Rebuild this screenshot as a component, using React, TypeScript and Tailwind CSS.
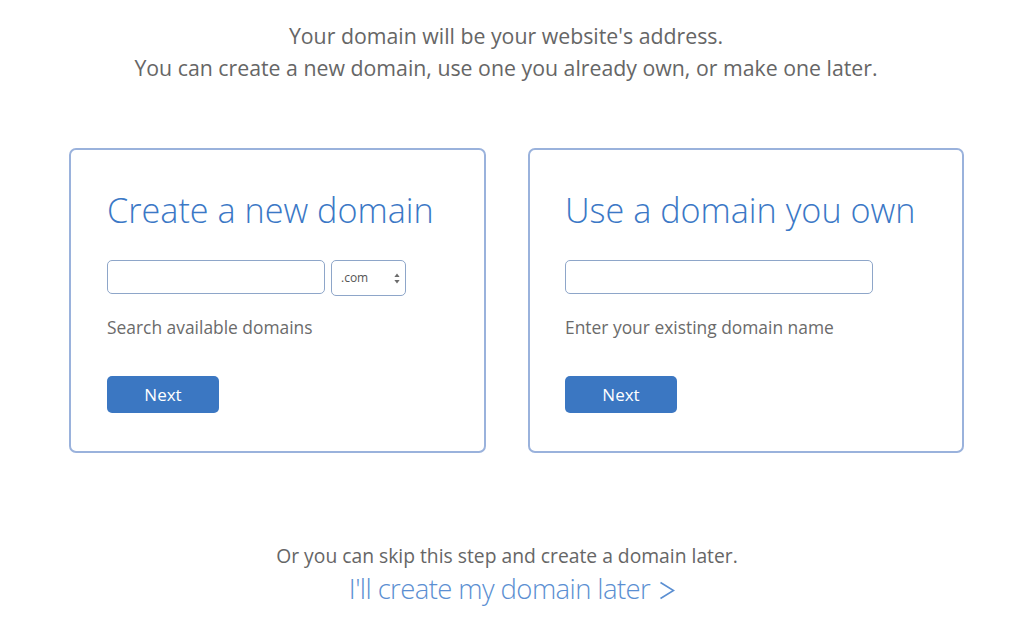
function SelectArrows() {
  return (
    <svg width="6" height="11" viewBox="0 0 6 11" className="shrink-0">
      <path d="M3 0.5 L5.6 4 H0.4 Z" fill="#6b6b6b" />
      <path d="M3 10.5 L5.6 7 H0.4 Z" fill="#6b6b6b" />
    </svg>
  );
}

function NextButton() {
  return (
    <button className="w-[112px] h-[37px] rounded-[5px] bg-[#3b77c2] text-white text-[17px] flex items-center justify-center">
      Next
    </button>
  );
}

export default function App() {
  return (
    <div
      className="w-[1024px] h-[631px] bg-white flex flex-col items-center pt-[20px]"
      style={{ fontFamily: '"Open Sans", "Noto Sans", sans-serif' }}
    >
      {/* Intro */}
      <div className="mr-[12px] text-center text-[21.3px] leading-[32px] text-[#666666]">
        <p>Your domain will be your website's address.</p>
        <p>You can create a new domain, use one you already own, or make one later.</p>
      </div>

      {/* Cards */}
      <div className="mt-[64px] flex gap-[42px] self-start ml-[69px]">
        <div className="w-[417px] h-[305px] border-2 border-[#9ab2dc] rounded-[7px] px-[36px] pt-[38px]">
          <h2 className="text-[34.2px] leading-[44px] font-light text-[#3b78c6] whitespace-nowrap">
            Create a new domain
          </h2>
          <div className="mt-[28px] flex items-start gap-[6px]">
            <div className="w-[218px] h-[34px] border-[1.5px] border-[#8ea6c9] rounded-[5px]" />
            <div className="w-[75px] h-[36px] border-[1.5px] border-[#8ea6c9] rounded-[5px] flex items-center justify-between pl-[9px] pr-[5px]">
              <span className="text-[12px] text-[#555555]">.com</span>
              <SelectArrows />
            </div>
          </div>
          <p className="mt-[19px] text-[17.4px] leading-[24px] text-[#6b6b6b]">Search available domains</p>
          <div className="mt-[37px]">
            <NextButton />
          </div>
        </div>

        <div className="w-[436px] h-[305px] border-2 border-[#9ab2dc] rounded-[7px] px-[35px] pt-[38px]">
          <h2 className="text-[34.2px] leading-[44px] font-light text-[#3b78c6] whitespace-nowrap">
            Use a domain you own
          </h2>
          <div className="mt-[28px] flex">
            <div className="w-[308px] h-[34px] border-[1.5px] border-[#8ea6c9] rounded-[5px]" />
          </div>
          <p className="mt-[21px] text-[17.4px] leading-[24px] text-[#6b6b6b]">Enter your existing domain name</p>
          <div className="mt-[37px]">
            <NextButton />
          </div>
        </div>
      </div>

      {/* Skip */}
      <p className="mr-[10px] mt-[91px] text-[19.3px] leading-[24px] text-[#666666]">
        Or you can skip this step and create a domain later.
      </p>
      <a className="mt-[1px] flex items-center gap-[9px] text-[27.5px] leading-[40px] font-light text-[#5b8fd2] tracking-[-0.6px]">
        I'll create my domain later
        <svg width="16" height="19" viewBox="0 0 16 19" fill="none" className="mt-[3px]">
          <path d="M1.5 1.5 L14.5 9.5 L1.5 17.5" stroke="#5b8fd2" strokeWidth="1.6" strokeLinejoin="miter" />
        </svg>
      </a>
    </div>
  );
}
